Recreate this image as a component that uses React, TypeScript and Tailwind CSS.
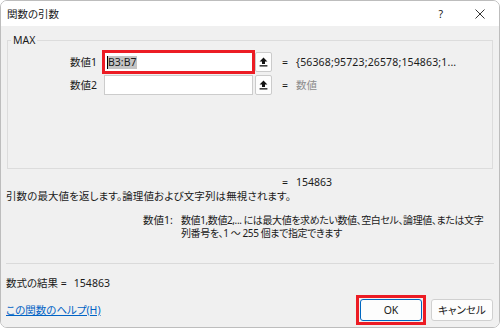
import React from "react";

function RefButton() {
  return (
    <button className="flex h-full w-[17px] items-center justify-center rounded-[2px] border border-[#cbcbcb] bg-[#fdfdfd]">
      <svg width="9" height="10" viewBox="0 0 9 10">
        <path d="M4.5 0.6 L8.4 4.6 L6 4.6 L6 7 L3 7 L3 4.6 L0.6 4.6 Z" fill="#111" />
        <rect x="0.6" y="8.2" width="7.8" height="1.3" fill="#111" />
      </svg>
    </button>
  );
}

function ArgRow({ label, children, value, muted }: { label: string; children?: React.ReactNode; value: string; muted?: boolean }) {
  return (
    <div className="flex h-[20px] items-center">
      <div className="w-[89px] shrink-0 text-right">{label}</div>
      <div className="relative ml-[7px] h-full w-[149px] shrink-0 border border-[#cccccc] bg-white">
        {children}
      </div>
      <div className="ml-[2px] h-full">
        <RefButton />
      </div>
      <span className="ml-[10px]">=</span>
      <span className={muted ? "ml-[8px] text-[#8c8c8c]" : "ml-[8px] tracking-[0.15px]"}>{value}</span>
    </div>
  );
}

export default function App() {
  return (
    <div className="h-[328px] w-[500px] bg-white font-[family-name:'Noto_Sans','Noto_Sans_CJK_JP',sans-serif] text-[10.5px] leading-[14px] text-[#1a1a1a] [font-feature-settings:'palt']">
      <div className="flex h-[328px] flex-col overflow-hidden rounded-[7px] border border-[#bdbdbd]">
        {/* title bar */}
        <div className="flex h-[25px] shrink-0 items-center bg-white pl-[6px]">
          <span>関数の引数</span>
          <span className="ml-auto mr-[32px]">?</span>
          <svg width="10" height="10" viewBox="0 0 10 10" className="mr-[14px]">
            <path d="M0.5 0.5 L9.5 9.5 M9.5 0.5 L0.5 9.5" stroke="#333" strokeWidth="1" />
          </svg>
        </div>

        <div className="flex flex-1 flex-col bg-[#f0f0f0]">
          <fieldset className="mx-[6px] mt-[7px] h-[136px] border border-[#dcdcdc]">
            <legend className="ml-[3px] px-[2px]">MAX</legend>
            <div className="mt-[5px] flex flex-col gap-[3px]">
              <ArgRow label="数値1" value="{56368;95723;26578;154863;1...">
                <div className="flex h-full items-center pl-[2px]">
                  <span className="h-[13px] w-px bg-black" />
                  <span className="bg-[#c4c4c4] pr-[1px] leading-[13px]">B3:B7</span>
                </div>
                <div className="absolute -inset-[3px] border-[3px] border-[#ec1c24]" />
              </ArgRow>
              <ArgRow label="数値2" value="数値" muted />
            </div>
          </fieldset>

          <div className="mt-[6px] h-[14px] pl-[281px]">
            =<span className="ml-[8px]">154863</span>
          </div>
          <div className="h-[14px] whitespace-nowrap pl-[5px] tracking-[0.1px]">引数の最大値を返します。論理値および文字列は無視されます。</div>

          <div className="mt-[11px] flex whitespace-nowrap pl-[142px] leading-[13px]">
            <div className="w-[38px] shrink-0">数値1:</div>
            <div className="text-[10px] tracking-[-0.4px]">
              数値1,数値2,... には最大値を求めたい数値、空白セル、論理値、または文字
              <br />
              列番号を、1 ～ 255 個まで指定できます
            </div>
          </div>

          <div className="mx-[5px] mt-[23px] h-px shrink-0 bg-[#dadada]" />

          <div className="mt-[12px] h-[14px] pl-[5px]">
            数式の結果 =<span className="ml-[7px]">154863</span>
          </div>

          <div className="mt-[9px] flex h-[22px] shrink-0 items-center pl-[5px] pr-[6px]">
            <a href="#" className="text-[#0063c5] underline">この関数のヘルプ(H)</a>
            <div className="relative ml-auto h-full">
              <button className="h-full w-[62px] rounded-[3px] border border-[#0067c0] bg-[#fdfdfd]">OK</button>
              <div className="absolute -inset-[4px] border-[3px] border-[#ec1c24]" />
            </div>
            <button className="ml-[9px] h-full w-[62px] rounded-[3px] border border-[#d0d0d0] bg-[#fdfdfd]">キャンセル</button>
          </div>
        </div>
      </div>
    </div>
  );
}
